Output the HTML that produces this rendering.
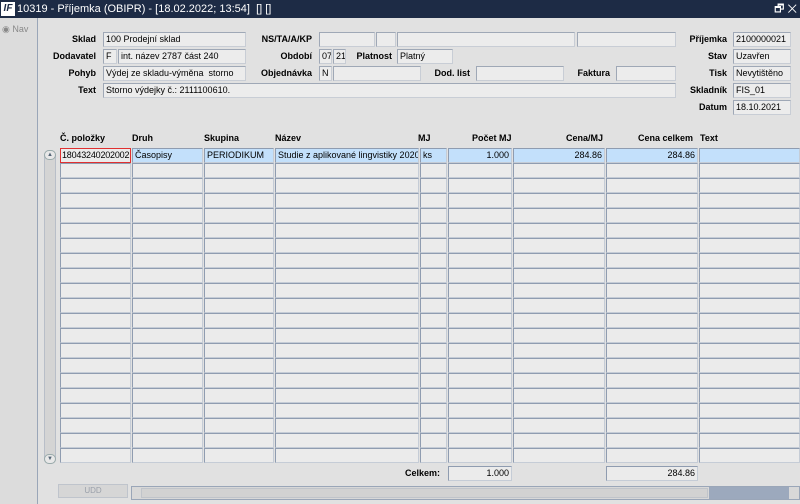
<!DOCTYPE html>
<html><head><meta charset="utf-8"><style>
*{margin:0;padding:0;box-sizing:border-box}
body{width:800px;height:504px;overflow:hidden;background:#e1e1e1;font-family:"Liberation Sans",sans-serif;font-size:9px;color:#000;position:relative}
.a{position:absolute}
.tb{left:0;top:0;width:800px;height:18px;background:#1d2b45;color:#fff;font-size:11px;line-height:18px}
.nav{left:0;top:18px;width:38px;height:486px;background:#dcdcdc;border-right:1px solid #9aa6b8}
.f{position:absolute;height:15px;border:1px solid #9fa8b6;border-right-color:#c8cdd5;border-bottom-color:#c8cdd5;background:#ececec;line-height:13px;padding-left:2px;white-space:nowrap;overflow:hidden}
.l{position:absolute;font-weight:bold;line-height:15px;text-align:right;white-space:nowrap}
.h{position:absolute;font-weight:bold;top:133px}
.c{position:absolute;height:15px;border:1px solid #8f9cb0;border-right-color:#c5ccd6;border-bottom-color:#c5ccd6;background:#ebebeb;line-height:13px;padding:0 2px;white-space:nowrap;overflow:hidden}
.s{background:#c3e0fb}
.r{text-align:right}
</style></head><body>
<div class="a tb"><span style="display:inline-block;width:14px;height:14px;background:#fff;color:#1d2b45;font-weight:bold;font-style:italic;font-size:10px;line-height:14px;text-align:center;margin:2px 2px 0 1px;vertical-align:top">IF</span>10319 - Příjemka (OBIPR) - [18.02.2022; 13:54]&nbsp; [] []<span style="position:absolute;right:3px;top:0">🗗 ✕</span></div>
<div class="a nav"><span style="position:absolute;left:2px;top:6px;color:#888;font-size:9px">◉ Nav</span></div>

<div class="l" style="left:60px;width:36px;top:32px">Sklad</div><div class="f" style="left:103px;top:32px;width:143px">100 Prodejní sklad</div>
<div class="l" style="left:40px;width:56px;top:49px">Dodavatel</div><div class="f" style="left:103px;top:49px;width:14px">F</div><div class="f" style="left:118px;top:49px;width:128px">int. název 2787 část 240</div>
<div class="l" style="left:60px;width:36px;top:66px">Pohyb</div><div class="f" style="left:103px;top:66px;width:143px">Výdej ze skladu-výměna&nbsp; storno</div>
<div class="l" style="left:60px;width:36px;top:83px">Text</div><div class="f" style="left:103px;top:83px;width:573px">Storno výdejky č.: 2111100610.</div>

<div class="l" style="left:250px;width:62px;top:32px">NS/TA/A/KP</div>
<div class="f" style="left:319px;top:32px;width:56px"></div><div class="f" style="left:376px;top:32px;width:20px"></div><div class="f" style="left:397px;top:32px;width:178px"></div><div class="f" style="left:577px;top:32px;width:99px"></div>
<div class="l" style="left:250px;width:62px;top:49px">Období</div><div class="f" style="left:319px;top:49px;width:13px">07</div><div class="f" style="left:333px;top:49px;width:13px">21</div>
<div class="l" style="left:350px;width:42px;top:49px">Platnost</div><div class="f" style="left:397px;top:49px;width:56px">Platný</div>
<div class="l" style="left:250px;width:62px;top:66px">Objednávka</div><div class="f" style="left:319px;top:66px;width:13px">N</div><div class="f" style="left:333px;top:66px;width:88px"></div>
<div class="l" style="left:425px;width:45px;top:66px">Dod. list</div><div class="f" style="left:476px;top:66px;width:88px"></div>
<div class="l" style="left:560px;width:50px;top:66px">Faktura</div><div class="f" style="left:616px;top:66px;width:60px"></div>

<div class="l" style="left:680px;width:47px;top:32px">Příjemka</div><div class="f" style="left:733px;top:32px;width:58px">2100000021</div>
<div class="l" style="left:680px;width:47px;top:49px">Stav</div><div class="f" style="left:733px;top:49px;width:58px">Uzavřen</div>
<div class="l" style="left:680px;width:47px;top:66px">Tisk</div><div class="f" style="left:733px;top:66px;width:58px">Nevytištěno</div>
<div class="l" style="left:680px;width:47px;top:83px">Skladník</div><div class="f" style="left:733px;top:83px;width:58px">FIS_01</div>
<div class="l" style="left:680px;width:47px;top:100px">Datum</div><div class="f" style="left:733px;top:100px;width:58px">18.10.2021</div>

<div class="h" style="left:60px">Č. položky</div><div class="h" style="left:132px">Druh</div><div class="h" style="left:204px">Skupina</div><div class="h" style="left:275px">Název</div><div class="h" style="left:418px">MJ</div><div class="h" style="left:472px">Počet MJ</div><div class="h" style="left:566px">Cena/MJ</div><div class="h" style="left:638px">Cena celkem</div><div class="h" style="left:700px">Text</div>

<div class="c" style="left:60px;top:148px;width:71px;border:1px solid #e03030;background:#ebebeb;padding:0 1px;letter-spacing:-0.2px">18043240202002</div>
<div class="c s" style="left:132px;top:148px;width:71px">Časopisy</div>
<div class="c s" style="left:204px;top:148px;width:70px">PERIODIKUM</div>
<div class="c s" style="left:275px;top:148px;width:144px">Studie z aplikované lingvistiky 2020/2</div>
<div class="c s" style="left:420px;top:148px;width:27px">ks</div>
<div class="c s r" style="left:448px;top:148px;width:64px">1.000</div>
<div class="c s r" style="left:513px;top:148px;width:92px">284.86</div>
<div class="c s r" style="left:606px;top:148px;width:92px">284.86</div>
<div class="c s" style="left:699px;top:148px;width:101px"></div>
<div id="g"></div>

<div class="a" style="left:44px;top:150px;width:12px;height:314px;background:#d4d4d4;border:1px solid #b8bec8;border-radius:5px"></div>
<div class="a" style="left:44px;top:150px;width:12px;height:10px;background:#e8e8e8;border:1px solid #9aa;border-radius:5px;font-size:6px;text-align:center;line-height:8px;color:#567">▲</div>
<div class="a" style="left:44px;top:454px;width:12px;height:10px;background:#e8e8e8;border:1px solid #9aa;border-radius:5px;font-size:6px;text-align:center;line-height:8px;color:#567">▼</div>

<div class="l" style="left:380px;width:60px;top:466px">Celkem:</div>
<div class="c r" style="left:448px;top:466px;width:64px">1.000</div>
<div class="c r" style="left:606px;top:466px;width:92px">284.86</div>

<div class="a" style="left:58px;top:484px;width:70px;height:14px;background:#d6d6d6;border:1px solid #bfc4cc;color:#9aa0aa;text-align:center;line-height:12px;font-size:8px">UDD</div>
<div class="a" style="left:131px;top:486px;width:669px;height:14px;background:#d8d8d8;border:1px solid #9aa6b8"></div>
<div class="a" style="left:141px;top:488px;width:567px;height:10px;background:#d2d2d2;border:1px solid #c0c4ca"></div>
<div class="a" style="left:709px;top:487px;width:80px;height:12px;background:#9ca9bd"></div>
<script>
var cols=[[60,71],[132,71],[204,70],[275,144],[420,27],[448,64],[513,92],[606,92],[699,101]],h='';
for(var i=1;i<21;i++){var t=148+i*15;for(var j=0;j<9;j++)h+='<div class="c" style="left:'+cols[j][0]+'px;top:'+t+'px;width:'+cols[j][1]+'px"></div>';}
document.getElementById('g').innerHTML=h;
</script>
</body></html>
